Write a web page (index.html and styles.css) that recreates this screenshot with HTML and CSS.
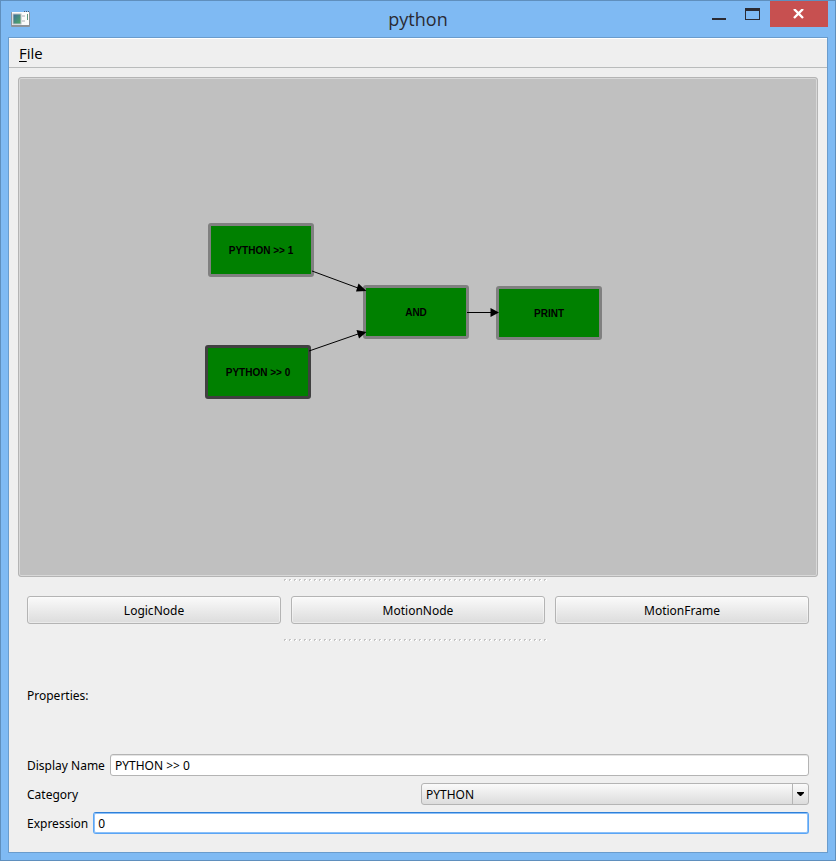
FILE: index.html
```html
<!DOCTYPE html>
<html lang="en">
<head>
<meta charset="utf-8">
<title>python</title>
<link rel="stylesheet" href="styles.css">
</head>
<body>
<div class="window">
  <header class="titlebar">
    <svg class="app-icon" width="19" height="16" viewBox="0 0 19 16" aria-hidden="true">
      <defs><linearGradient id="screen" x1="0" y1="0" x2="1" y2="1"><stop offset="0" stop-color="#3c6a9c"/><stop offset="1" stop-color="#4fae62"/></linearGradient></defs>
      <rect x="0" y="1" width="19" height="15" rx="1" fill="#8d9299"/>
      <rect x="1" y="1" width="17" height="13" fill="#fbfbfb"/>
      <path d="M13 0h1v1h-1zM15 0h1v1h-1zM17 0h1v1h-1z" fill="#4a5a70"/>
      <rect x="2" y="3" width="8" height="10" fill="url(#screen)" stroke="#b6bcc2" stroke-width="1"/>
      <path d="M11 4h3v2h-3zM11 9h3v2h-3z" fill="#d3d5d8"/>
      <rect x="16" y="3" width="1" height="6" fill="#5d9a80"/>
    </svg>
    <h1 class="title">python</h1>
    <div class="controls">
      <button class="control" type="button" aria-label="Minimize"><svg width="14" height="12" viewBox="0 0 14 12"><path d="M0 10h14v2H0z" fill="#2b2b33"/></svg></button>
      <button class="control" type="button" aria-label="Maximize"><svg width="16" height="12" viewBox="0 0 16 12"><path d="M0 0h15v12H0zM1 3v8h13V3z" fill="#2b2b33" fill-rule="evenodd"/></svg></button>
      <button class="control close" type="button" aria-label="Close"><svg width="12" height="10" viewBox="0 0 12 10"><path d="M1 0L10 9M10 0L1 9" stroke="#fff" stroke-width="2.4"/></svg></button>
    </div>
  </header>
  <div class="client">
    <nav class="menubar"><button class="menu" type="button"><u>F</u>ile</button></nav>
    <main class="content">
      <section class="canvas" aria-label="Node graph">
        <div class="node python-one">PYTHON &gt;&gt; 1</div>
        <div class="node selected python-zero">PYTHON &gt;&gt; 0</div>
        <div class="node and">AND</div>
        <div class="node print">PRINT</div>
        <svg class="edges" width="600" height="340" aria-hidden="true">
          <g stroke="#000" stroke-width="1">
            <path d="M293 193L339 210"/>
            <path d="M290 273L339 256"/>
            <path d="M448 234.500H472"/>
          </g>
          <path d="M347.500 213L339.500 205.500L337 213.500ZM347.500 254L337.500 252L340 260.500ZM480 234.500L471.500 230V239Z"/>
        </svg>
      </section>
      <div class="splitter"></div>
      <div class="palette">
        <button class="push" type="button">LogicNode</button>
        <button class="push" type="button">MotionNode</button>
        <button class="push" type="button">MotionFrame</button>
      </div>
      <div class="splitter"></div>
      <form class="properties">
        <h2 class="heading">Properties:</h2>
        <div class="row">
          <label for="name">Display Name</label>
          <input class="field" id="name" type="text" value="PYTHON &gt;&gt; 0">
        </div>
        <div class="row split">
          <label for="category">Category</label>
          <div class="combo">
            <select class="select" id="category"><option>PYTHON</option></select>
            <svg class="arrow" width="7" height="4" viewBox="0 0 7 4" aria-hidden="true"><path d="M0 0h7v1L4 4H3L0 1z"/></svg>
          </div>
        </div>
        <div class="row">
          <label for="expression">Expression</label>
          <input class="field active" id="expression" type="text" value="0">
        </div>
      </form>
    </main>
  </div>
</div>
</body>
</html>
```
FILE: styles.css
```css
* {
  box-sizing: border-box;
}

body {
  margin: 0;
  font: 12px/16px "Noto Sans", sans-serif;
  color: #000;
}

button,
input,
select {
  font: inherit;
  color: inherit;
}

.window {
  display: flex;
  flex-direction: column;
  min-height: 100vh;
  padding: 0 7px 7px;
  border: 1px solid #5f8fbd;
  background: #7fbaf3;
}

.titlebar {
  display: grid;
  grid-template-columns: 1fr auto 1fr;
  height: 36px;
}

.app-icon {
  margin: 10px 0 0 3px;
}

.title {
  margin: 0;
  font: 18px/36px "Open Sans", sans-serif;
  color: #2b2b33;
}

.controls {
  display: flex;
  justify-content: flex-end;
  height: 26px;
}

.control {
  display: flex;
  align-items: center;
  justify-content: center;
  width: 34px;
  padding: 0;
  border: 0;
  background: none;
}

.close {
  width: 58px;
  background: #c75050;
}

.client {
  display: flex;
  flex: 1;
  flex-direction: column;
  border: 1px solid #6a9ccc;
  background: #efefef;
}

.menubar {
  height: 30px;
  border-top: 1px solid #fff;
  border-bottom: 1px solid #b9bbbb;
}

.menu {
  padding: 0 10px;
  border: 0;
  background: none;
  font: 15px/28px "Open Sans", sans-serif;
}

.menu u {
  text-underline-offset: 2px;
}

.content {
  display: flex;
  flex: 1;
  flex-direction: column;
  padding: 9px 9px 18px;
}

.canvas {
  position: relative;
  flex: 1;
  min-height: 340px;
  border: 1px solid #b4b4b4;
  border-radius: 3px;
  background: #c0c0c0;
  box-shadow: inset 0 0 0 1px #d8d8d8;
}

.edges {
  position: absolute;
  top: 0;
  left: 0;
}

.node {
  position: absolute;
  width: 106px;
  height: 54px;
  border: 3px solid #808080;
  border-radius: 3px;
  background: #008000;
  font: bold 10px/50px "Liberation Sans", sans-serif;
  text-align: center;
}

.selected {
  border-color: #404040;
}

.python-one {
  left: 189px;
  top: 145px;
}

.python-zero {
  left: 186px;
  top: 267px;
}

.and {
  left: 344px;
  top: 207px;
}

.print {
  left: 477px;
  top: 208px;
}

.splitter {
  align-self: center;
  width: 268px;
  height: 6px;
  padding-right: 5px;
  background:
    linear-gradient(90deg, #c4c4c4 2px, #fff 2px) 0 2px / 5px 1px repeat-x content-box,
    linear-gradient(90deg, #c4c4c4 1px, #fff 1px) 0 3px / 5px 1px repeat-x content-box;
  mask: repeating-linear-gradient(90deg, #000 0 3px, transparent 3px 5px);
}

.palette {
  display: flex;
  gap: 10px;
  padding: 13px 9px;
}

.push {
  flex: 1;
  height: 28px;
  padding: 2px 0 0;
  border: 1px solid #b4b4b4;
  border-radius: 3px;
  background: linear-gradient(#fafafa, #dcdcdc);
  box-shadow: inset 0 0 0 1px rgba(255, 255, 255, 0.4);
}

.properties {
  display: flex;
  flex-direction: column;
  gap: 7px;
  padding: 0 9px;
}

.heading {
  margin: 0;
  padding: 45px 0 43px;
  font: inherit;
}

.row {
  display: flex;
  align-items: center;
  gap: 5px;
  height: 22px;
}

.row label {
  padding-top: 2px;
}

.field {
  flex: 1;
  min-width: 0;
  height: 22px;
  padding: 1px 4px 0;
  border: 1px solid #b4b4b4;
  border-radius: 3px;
  outline: 0;
  background: #fff;
  box-shadow: inset 0 1px #e4e4e4;
}

.active {
  border-color: #5aa5f5;
  border-top-color: #2f80d8;
  box-shadow: inset 0 0 0 1px #8cc0f8;
}

.split {
  gap: 6px;
}

.split label,
.combo {
  flex: 1;
}

.combo {
  position: relative;
  height: 22px;
}

.select {
  width: 100%;
  height: 22px;
  padding: 2px 4px 0;
  border: 1px solid #b4b4b4;
  border-radius: 3px;
  appearance: none;
  background:
    linear-gradient(#b4b4b4, #b4b4b4) right 15px top / 1px 100% no-repeat,
    linear-gradient(#fafafa, #dcdcdc);
}

.arrow {
  position: absolute;
  top: 9px;
  right: 5px;
  pointer-events: none;
}
```
